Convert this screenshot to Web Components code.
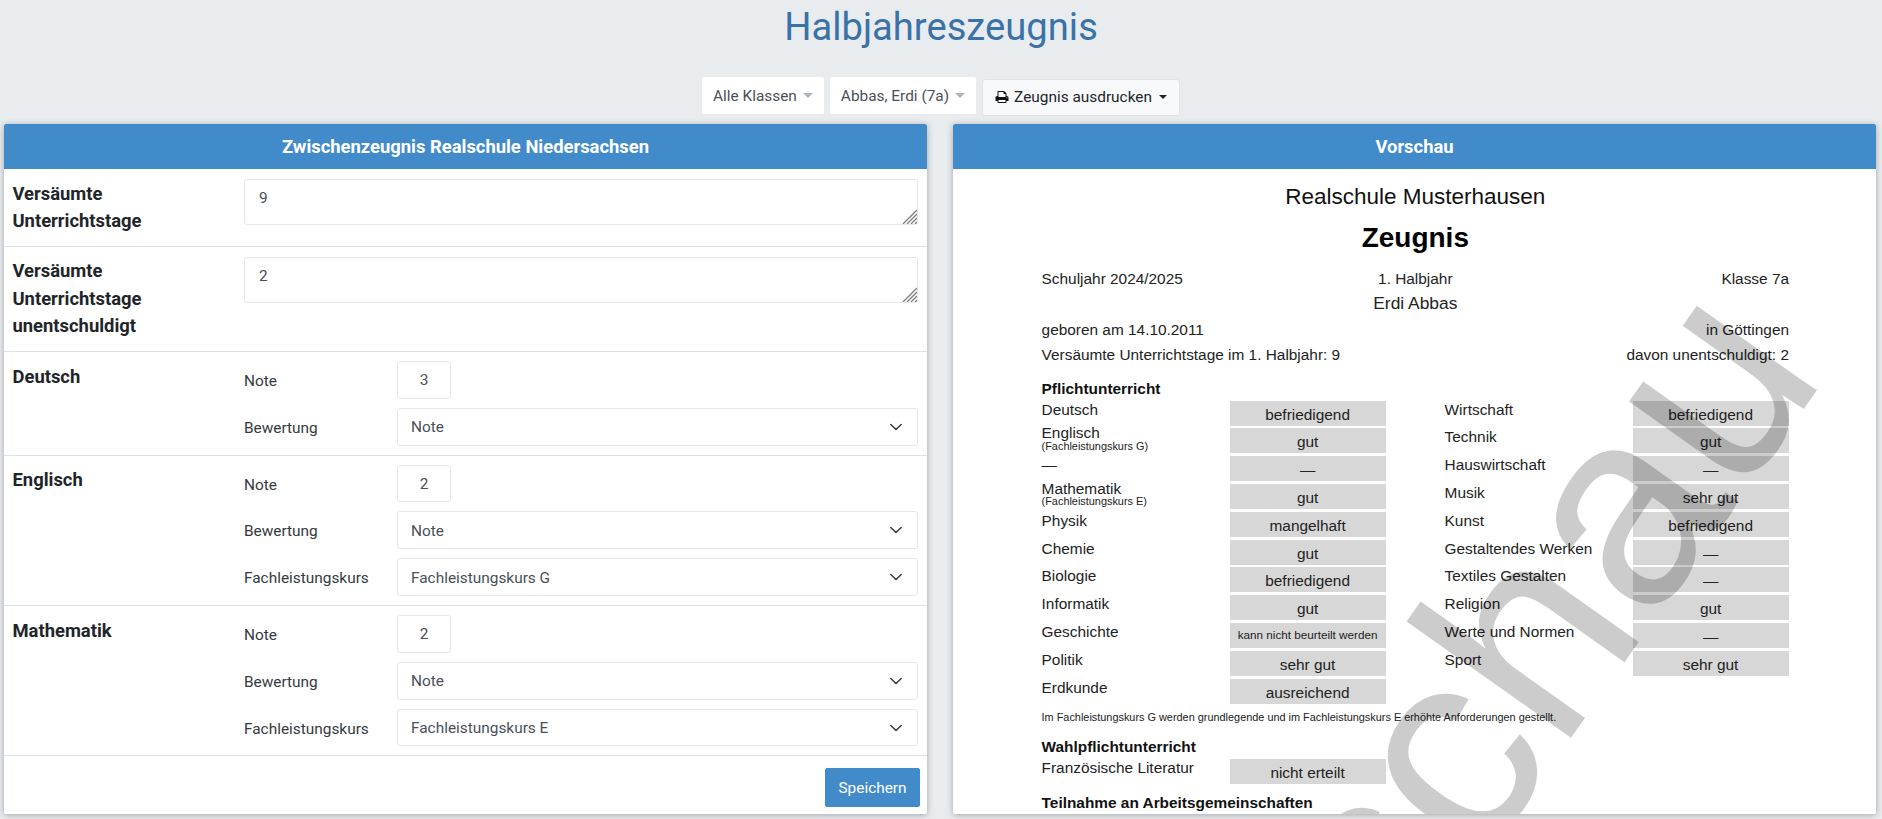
<!DOCTYPE html>
<html lang="de">
<head>
<meta charset="utf-8">
<title>Halbjahreszeugnis</title>
<style>
    html, body { margin: 0; height: 100%; overflow: hidden; }
    body { background: #e9ecef; font-family: Roboto, "Liberation Sans", sans-serif; color: #212529; }
</style>
</head>
<body>
<page-title>Halbjahreszeugnis</page-title>
<tool-bar>
    <pick-button>Alle Klassen</pick-button>
    <pick-button>Abbas, Erdi (7a)</pick-button>
    <print-button>Zeugnis ausdrucken</print-button>
</tool-bar>
<two-panels>
    <card-panel heading="Zwischenzeugnis Realschule Niedersachsen">
        <form-row label="Versäumte Unterrichtstage"><text-box>9</text-box></form-row>
        <form-row label="Versäumte Unterrichtstage unentschuldigt"><text-box>2</text-box></form-row>
        <form-row label="Deutsch">
            <field-line label="Note"><note-box>3</note-box></field-line>
            <field-line label="Bewertung"><select-box>Note</select-box></field-line>
        </form-row>
        <form-row label="Englisch">
            <field-line label="Note"><note-box>2</note-box></field-line>
            <field-line label="Bewertung"><select-box>Note</select-box></field-line>
            <field-line label="Fachleistungskurs"><select-box>Fachleistungskurs G</select-box></field-line>
        </form-row>
        <form-row label="Mathematik">
            <field-line label="Note"><note-box>2</note-box></field-line>
            <field-line label="Bewertung"><select-box>Note</select-box></field-line>
            <field-line label="Fachleistungskurs"><select-box>Fachleistungskurs E</select-box></field-line>
        </form-row>
        <save-bar>Speichern</save-bar>
    </card-panel>
    <card-panel heading="Vorschau">
        <preview-sheet>
            <sheet-line kind="school">Realschule Musterhausen</sheet-line>
            <sheet-line kind="title">Zeugnis</sheet-line>
            <sheet-line><span>Schuljahr 2024/2025</span><span>1. Halbjahr</span><span>Klasse 7a</span></sheet-line>
            <sheet-line kind="center">Erdi Abbas</sheet-line>
            <sheet-line kind="split"><span>geboren am 14.10.2011</span><span>in Göttingen</span></sheet-line>
            <sheet-line kind="split"><span>Versäumte Unterrichtstage im 1. Halbjahr: 9</span><span>davon unentschuldigt: 2</span></sheet-line>
            <sheet-line kind="head" style="margin-top:10.6px">Pflichtunterricht</sheet-line>
            <grade-grid style="margin-top:4.1px">
                <grade-column slot="left">
                    <grade-row subject="Deutsch" grade="befriedigend"></grade-row>
                    <grade-row subject="Englisch" sub="(Fachleistungskurs G)" grade="gut"></grade-row>
                    <grade-row subject="—" grade="—"></grade-row>
                    <grade-row subject="Mathematik" sub="(Fachleistungskurs E)" grade="gut"></grade-row>
                    <grade-row subject="Physik" grade="mangelhaft"></grade-row>
                    <grade-row subject="Chemie" grade="gut"></grade-row>
                    <grade-row subject="Biologie" grade="befriedigend"></grade-row>
                    <grade-row subject="Informatik" grade="gut"></grade-row>
                    <grade-row subject="Geschichte" grade="kann nicht beurteilt werden" small></grade-row>
                    <grade-row subject="Politik" grade="sehr gut"></grade-row>
                    <grade-row subject="Erdkunde" grade="ausreichend"></grade-row>
                </grade-column>
                <grade-column slot="right">
                    <grade-row subject="Wirtschaft" grade="befriedigend"></grade-row>
                    <grade-row subject="Technik" grade="gut"></grade-row>
                    <grade-row subject="Hauswirtschaft" grade="—"></grade-row>
                    <grade-row subject="Musik" grade="sehr gut"></grade-row>
                    <grade-row subject="Kunst" grade="befriedigend"></grade-row>
                    <grade-row subject="Gestaltendes Werken" grade="—"></grade-row>
                    <grade-row subject="Textiles Gestalten" grade="—"></grade-row>
                    <grade-row subject="Religion" grade="gut"></grade-row>
                    <grade-row subject="Werte und Normen" grade="—"></grade-row>
                    <grade-row subject="Sport" grade="sehr gut"></grade-row>
                </grade-column>
            </grade-grid>
            <sheet-line kind="note" style="margin-top:6.2px">Im Fachleistungskurs G werden grundlegende und im Fachleistungskurs E erhöhte Anforderungen gestellt.</sheet-line>
            <sheet-line kind="head" style="margin-top:13.4px">Wahlpflichtunterricht</sheet-line>
            <grade-column style="margin-top:3.4px;width:344px">
                <grade-row subject="Französische Literatur" grade="nicht erteilt"></grade-row>
            </grade-column>
            <sheet-line kind="head" style="margin-top:9.2px">Teilnahme an Arbeitsgemeinschaften</sheet-line>
        </preview-sheet>
    </card-panel>
</two-panels>

<script>
// kleine Hilfe: Klasse mit fester Shadow-Vorlage
function shadowElement(name, html) {
    customElements.define(name, class extends HTMLElement {
        constructor() {
            super();
            this.attachShadow({ mode: 'open' });
        }
        connectedCallback() {
            this.shadowRoot.innerHTML = typeof html === 'function' ? html(this) : html;
        }
    });
}

const CHEVRON = `<svg width="16" height="16" viewBox="0 0 16 16" fill="none" stroke="#343a40" stroke-width="1.5" stroke-linecap="round" stroke-linejoin="round"><path d="M2.8 5.5 8 10.5l5.2-5"/></svg>`;
const PRINTER = `<svg width="14" height="14" viewBox="0 0 1792 1792" fill="#111"><path d="M448 1536h896v-256h-896v256zm0-640h896v-384h-160q-40 0-68-28t-28-68v-160h-640v640zm1152 64q0-26-19-45t-45-19-45 19-19 45 19 45 45 19 45-19 19-45zm128 0v416q0 13-9.5 22.5t-22.5 9.5h-224v160q0 40-28 68t-68 28h-960q-40 0-68-28t-28-68v-160h-224q-13 0-22.5-9.5t-9.5-22.5v-416q0-79 56.5-135.5t135.5-56.5h64v-544q0-40 28-68t68-28h672q40 0 88 20t76 48l152 152q28 28 48 76t20 88v256h64q79 0 135.5 56.5t56.5 135.5z"/></svg>`;

shadowElement('page-title', `
    <style>
        :host { display: block; height: 77px; padding-top: 4px; box-sizing: border-box; text-align: center; }
        h1 { margin: 0; font: 400 38.2px/46px Roboto, sans-serif; color: #3a72a8; }
    </style>
    <h1><slot></slot></h1>`);

shadowElement('tool-bar', `
    <style>
        :host { display: flex; justify-content: center; align-items: flex-start; gap: 6px; height: 47px; box-sizing: border-box; }
    </style>
    <slot></slot>`);

shadowElement('pick-button', `
    <style>
        :host { display: flex; align-items: center; gap: 6px; height: 37px; padding: 0 11px 0 11px; box-sizing: border-box; background: #fff; border-radius: 2px; font-size: 15.4px; color: #495057; }
        i { width: 0; height: 0; border: 5px solid transparent; border-top-color: #adb5bd; border-bottom: 0; }
    </style>
    <slot></slot><i></i>`);

shadowElement('print-button', `
    <style>
        :host { display: flex; align-items: center; height: 37px; margin-top: 1.7px; padding: 0 12px 0 12px; box-sizing: border-box; background: #f8f9fa; border: 1px solid #dfe3e7; border-radius: 3px; font-size: 15.4px; color: #212529; }
        svg { margin-right: 5px; }
        i { width: 0; height: 0; margin-left: 7px; border: 4.3px solid transparent; border-top-color: #212529; border-bottom: 0; }
    </style>
    ${PRINTER}<slot></slot><i></i>`);

shadowElement('two-panels', `
    <style>
        :host { display: grid; grid-template-columns: 1fr 1fr; column-gap: 26px; height: 690px; padding: 0 6px 0 4px; }
    </style>
    <slot></slot>`);

shadowElement('card-panel', el => `
    <style>
        :host { display: flex; flex-direction: column; min-width: 0; background: #fff; border-radius: 2px; box-shadow: 0 1px 6px rgba(0,0,0,.3); overflow: hidden; }
        header { flex: none; height: 45px; line-height: 45px; background: #428bca; color: #fff; text-align: center; font-size: 18.4px; font-weight: 700; }
        .body { flex: 1; min-height: 0; position: relative; }
    </style>
    <header>${el.getAttribute('heading')}</header>
    <div class="body"><slot></slot></div>`);

shadowElement('form-row', el => `
    <style>
        :host { display: grid; grid-template-columns: 231.5px 1fr; padding: 9px 9.5px 0 8.5px; box-sizing: border-box; border-bottom: 1px solid #dee2e6; }
        .label { font-size: 18.4px; font-weight: 700; line-height: 27.4px; padding: 1.5px 20px 11.5px 0; color: #212529; }
        .fields { display: flex; flex-direction: column; gap: 9px; padding-bottom: 9px; }
    </style>
    <div class="label">${el.getAttribute('label')}</div>
    <div class="fields"><slot></slot></div>`);

shadowElement('text-box', el => `
    <style>
        :host { display: block; position: relative; }
        textarea { display: block; width: 100%; height: 46px; margin-top: 1px; box-sizing: border-box; padding: 7px 14px; border: 1px solid #e3e6ea; border-radius: 3px; font: 15.4px/23px Roboto, sans-serif; color: #495057; background: #fff; outline: none; resize: none; }
        /* Griff zum Vergroessern */
        svg { position: absolute; right: 1px; bottom: 1px; }
    </style>
    <textarea>${el.textContent}</textarea>
    <svg width="15" height="15" viewBox="0 0 15 15" stroke="#7d7d7d" stroke-width="1.3"><path d="M15 1 1 15M15 5 5 15M15 9 9 15M15 13l-2 2"/></svg>`);

shadowElement('field-line', el => `
    <style>
        :host { display: grid; grid-template-columns: 153px 1fr; align-items: center; font-size: 15.4px; color: #343a40; }
        span { padding-top: 2px; }
    </style>
    <span>${el.getAttribute('label')}</span>
    <slot></slot>`);

shadowElement('note-box', `
    <style>
        :host { display: flex; align-items: center; justify-content: center; width: 54px; height: 37.8px; padding-top: 1px; box-sizing: border-box; border: 1px solid #e3e6ea; border-radius: 3px; font-size: 15.4px; color: #495057; background: #fff; }
    </style>
    <slot></slot>`);

shadowElement('select-box', `
    <style>
        :host { display: flex; align-items: center; justify-content: space-between; height: 37.8px; padding: 1px 13px 0 13px; box-sizing: border-box; border: 1px solid #e3e6ea; border-radius: 3px; font-size: 15.4px; color: #495057; background: #fff; }
        svg { flex: none; margin-top: -1px; }
    </style>
    <slot></slot>${CHEVRON}`);

shadowElement('save-bar', `
    <style>
        :host { display: flex; justify-content: flex-end; padding: 12px 7px 0 0; }
        button { width: 95px; height: 39px; padding: 0; border: 1px solid #428bca; border-radius: 2px; background: #428bca; color: #fff; font: 15.4px Roboto, sans-serif; }
    </style>
    <button><slot></slot></button>`);

shadowElement('preview-sheet', `
    <style>
        :host { display: block; height: 100%; box-sizing: border-box; padding: 12.6px 87px 0 88.6px; font-family: "Liberation Sans", sans-serif; font-size: 15.4px; color: #222; overflow: hidden; }
        /* Wasserzeichen liegt ueber dem Blatt */
        svg { position: absolute; left: 0; top: 0; width: 100%; height: 100%; pointer-events: none; }
        text { font-family: "Liberation Sans", sans-serif; font-size: 278px; fill: rgba(0,0,0,.2); }
    </style>
    <slot></slot>
    <svg><text transform="translate(205 1152) rotate(-54.7)">Vorschau</text></svg>`);

shadowElement('sheet-line', el => {
    const styles = {
        school: 'display:block;text-align:center;font-size:22.5px;line-height:30px;margin-bottom:8.6px;color:#111;',
        title: 'display:block;text-align:center;font-size:28px;line-height:36px;font-weight:700;margin-bottom:9.4px;color:#000;',
        center: 'display:block;text-align:center;font-size:17.4px;line-height:25.6px;',
        split: 'display:flex;justify-content:space-between;line-height:25.6px;',
        head: 'display:block;font-weight:700;line-height:20px;margin-bottom:-2px;color:#111;',
        note: 'display:block;font-size:10.9px;line-height:14px;white-space:nowrap;',
    };
    const base = 'display:grid;grid-template-columns:1fr auto 1fr;line-height:25.6px;';
    return `
    <style>
        :host { ${styles[el.getAttribute('kind')] || base} }
        ::slotted(span:last-child) { text-align: right; }
    </style>
    <slot></slot>`;
});

shadowElement('grade-grid', `
    <style>
        :host { display: grid; grid-template-columns: 344px 344px; column-gap: 59px; align-items: start; }
    </style>
    <slot name="left"></slot><slot name="right"></slot>`);

shadowElement('grade-column', `
    <style>
        :host { display: flex; flex-direction: column; gap: 2.8px; }
    </style>
    <slot></slot>`);

shadowElement('grade-row', el => {
    const sub = el.getAttribute('sub');
    return `
    <style>
        :host { display: grid; grid-template-columns: 188px 156px; height: 25px; }
        .name { line-height: 17.6px; white-space: nowrap; }
        .name.two { line-height: 9.4px; }
        small { display: block; font-size: 10.9px; line-height: 17px; }
        .grade { height: 25px; background: #d7d7d7; text-align: center; line-height: 27px; white-space: nowrap; }
        .grade.small { font-size: 11.7px; line-height: 24px; }
    </style>
    <div class="name${sub ? ' two' : ''}">${el.getAttribute('subject')}${sub ? `<small>${sub}</small>` : ''}</div>
    <div class="grade${el.hasAttribute('small') ? ' small' : ''}">${el.getAttribute('grade')}</div>`;
});
</script>
</body>
</html>
